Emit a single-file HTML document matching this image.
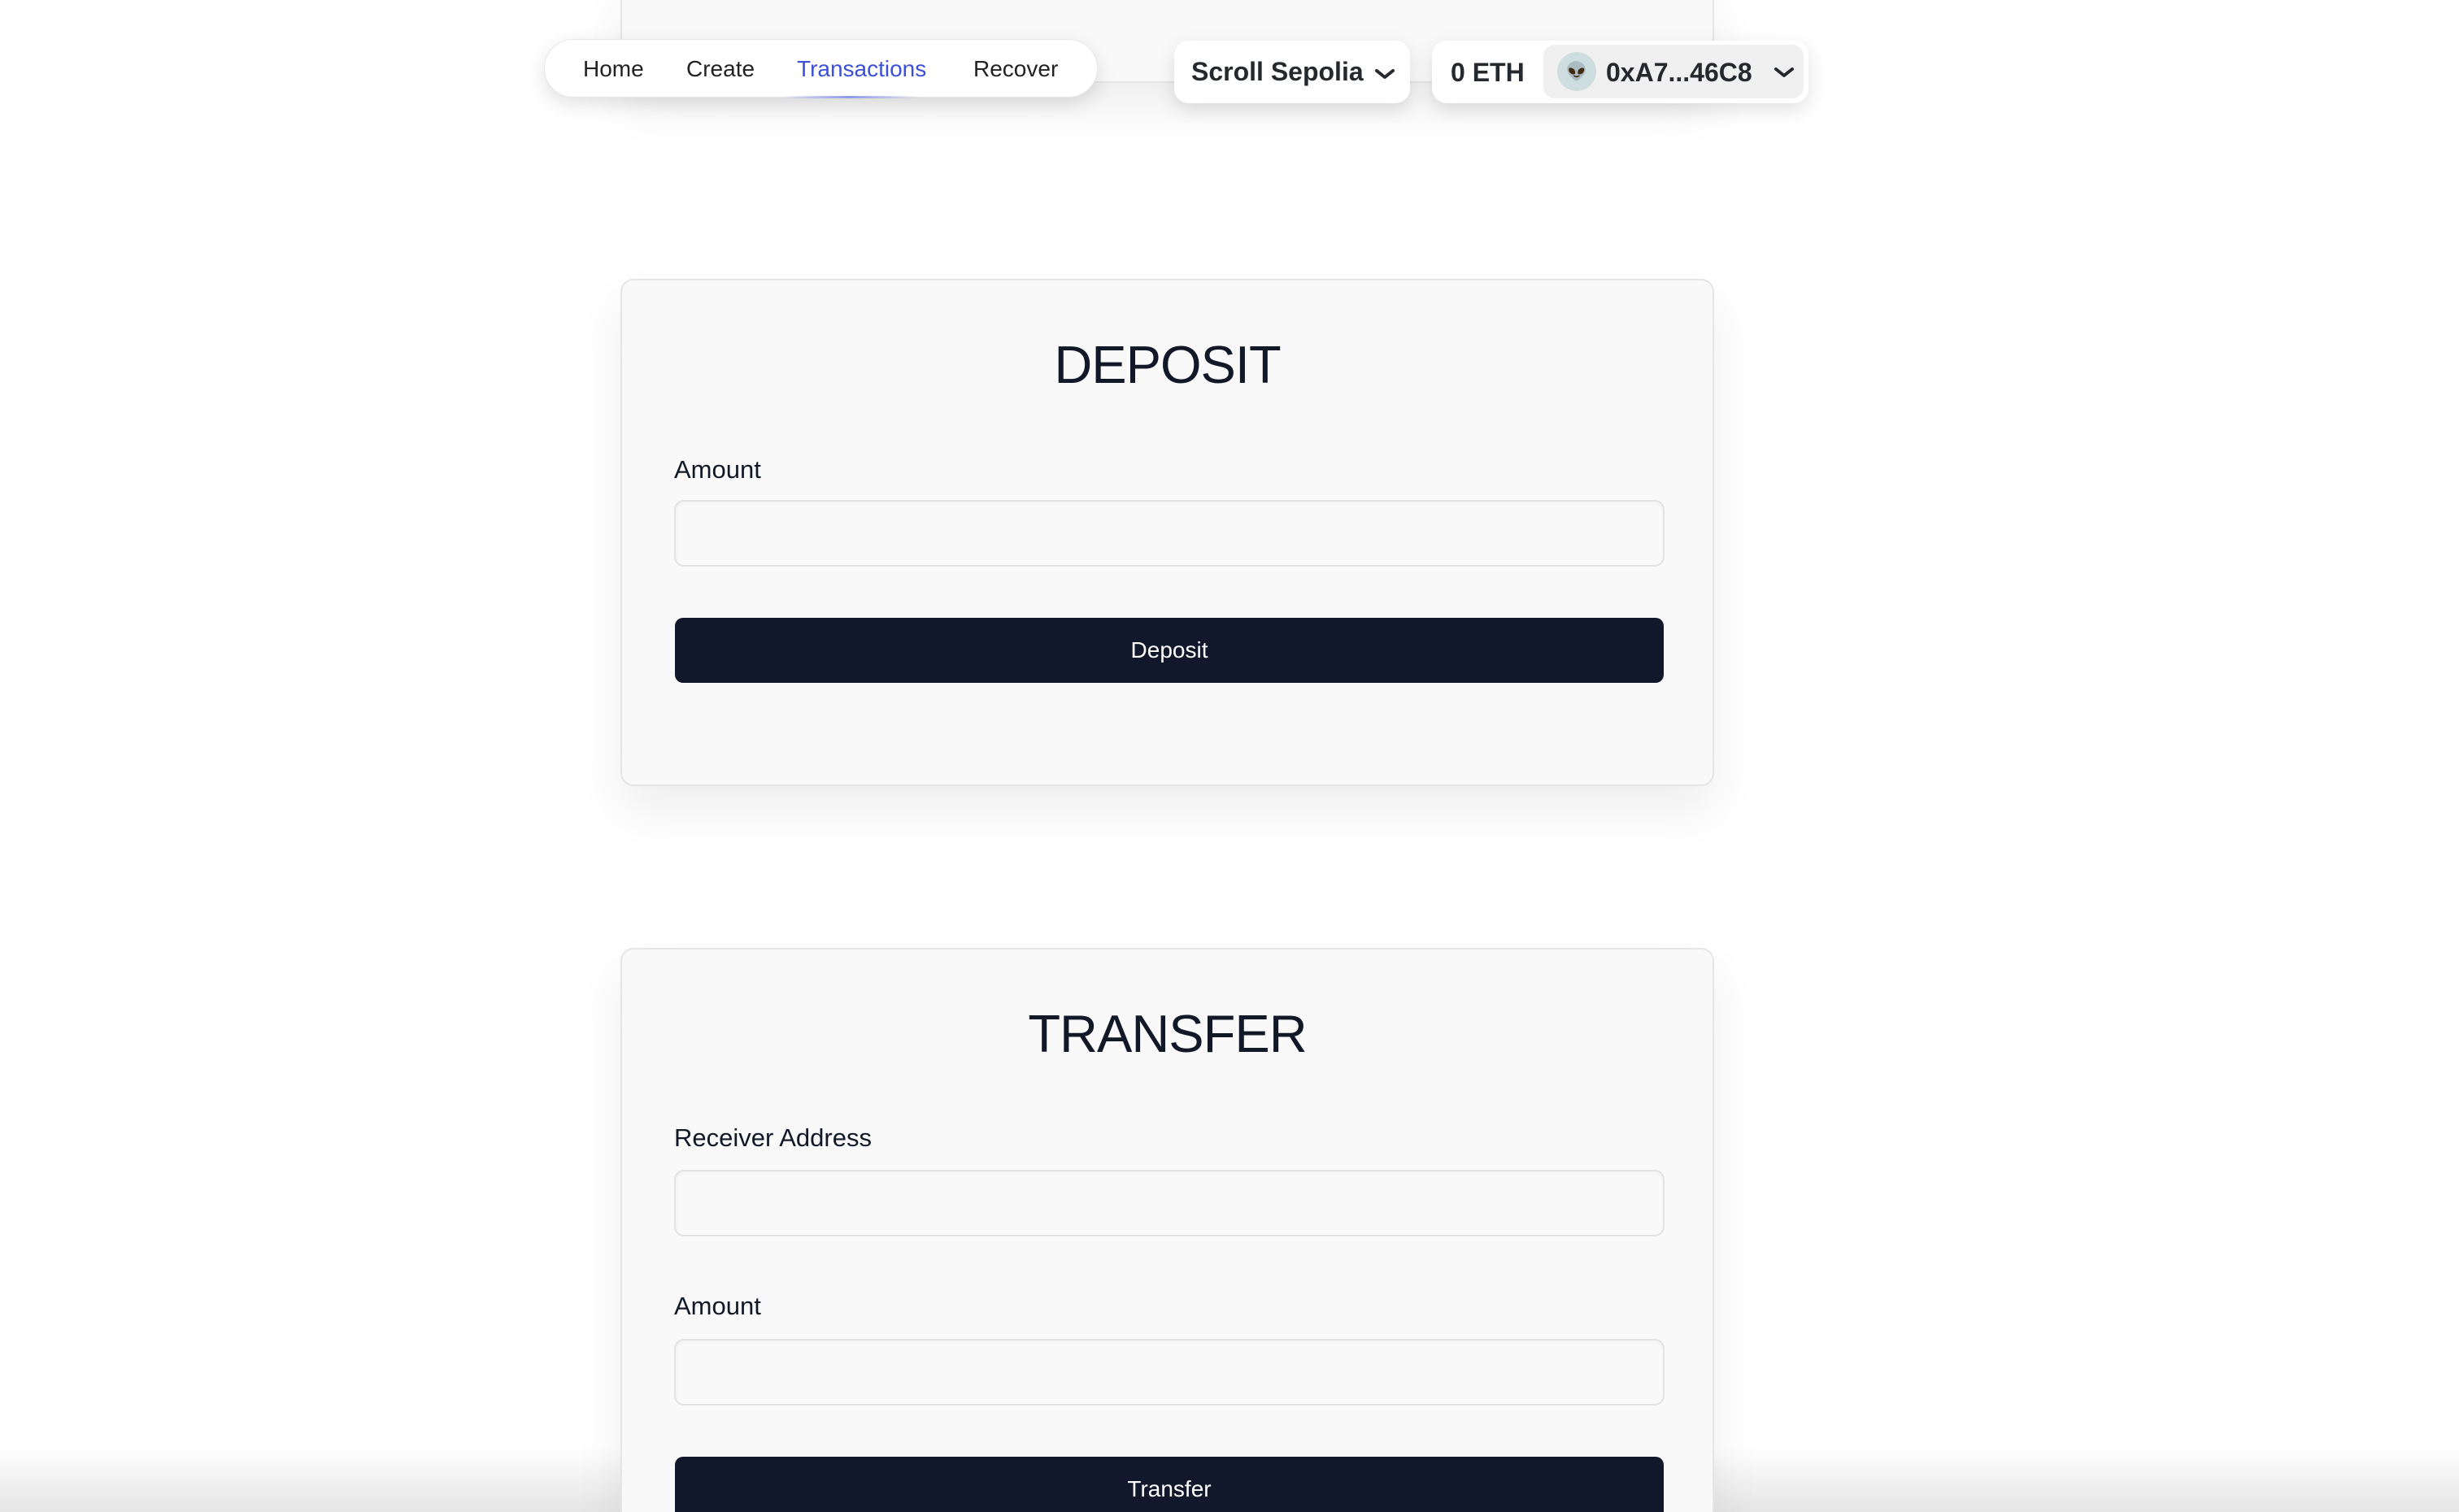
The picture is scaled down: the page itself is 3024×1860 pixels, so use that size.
<!DOCTYPE html>
<html style="width:3024px;height:1860px;overflow:hidden"><head><meta charset="utf-8"><style>
*{box-sizing:border-box;margin:0;padding:0}
body{width:3024px;height:1860px;background:#fff;position:relative;overflow:hidden;font-family:"Liberation Sans",sans-serif;color:#111827}
.card{position:absolute;left:763px;width:1345px;background:#f9f9f9;border:2px solid #e5e5e5;border-radius:16px;box-shadow:0 30px 60px rgba(0,0,0,0.07)}
.title{position:absolute;left:0;right:0;text-align:center;font-size:65px;color:#111827;letter-spacing:-1px}
.lbl{position:absolute;left:64px;font-size:31px;color:#111827}
.inp{position:absolute;left:64px;width:1218px;height:82px;border:2px solid #e3e3e3;border-radius:12px;background:#f9f9f9;box-shadow:inset 0 2px 4px rgba(0,0,0,0.04)}
.btn{position:absolute;left:65px;width:1216px;height:80px;background:#12182b;border-radius:10px;color:#fff;font-size:28px;text-align:center;line-height:80px}
.pill{position:absolute;background:#fff;border-radius:40px;box-shadow:0 8px 24px rgba(0,0,0,0.12)}
.nav a{position:absolute;top:20px;font-size:28px;color:#222}
</style></head><body>
<div style="position:absolute;left:0;top:1780px;width:3024px;height:80px;background:linear-gradient(180deg,rgba(220,220,220,0),rgba(220,220,220,0.75))"></div>
<div class="card" style="top:-20px;height:122px"></div>

<div class="pill nav" style="left:669px;top:48px;width:681px;height:72px;border:1px solid #e8e8e8">
<a style="left:47px">Home</a><a style="left:174px">Create</a><a style="left:310px;color:#3b4fd8">Transactions</a><a style="left:527px">Recover</a>
<div style="position:absolute;left:290px;top:69px;width:170px;height:3px;background:linear-gradient(90deg,transparent,#8e9be8,transparent)"></div>
</div>

<div class="pill" style="left:1444px;top:50px;width:290px;height:77px;border-radius:18px;font-weight:bold;font-size:32px;line-height:77px;padding-left:21px;color:#25292e">Scroll Sepolia <svg width="26" height="16" viewBox="0 0 26 16" style="margin-left:4px"><path d="M3 4 L13 12 L23 4" stroke="#25292e" stroke-width="4" fill="none" stroke-linecap="round" stroke-linejoin="round"/></svg></div>

<div class="pill" style="left:1761px;top:50px;width:463px;height:77px;border-radius:18px;font-weight:bold;font-size:32px;color:#25292e">
<span style="position:absolute;left:23px;top:21px">0 ETH</span>
<div style="position:absolute;left:137px;top:5px;width:320px;height:66px;background:#f0f0f0;border-radius:14px">
<div style="position:absolute;left:17px;top:9px;width:48px;height:48px;border-radius:50%;background:#cddde0;text-align:center;line-height:48px;font-size:22px">👽</div>
<span style="position:absolute;left:77px;top:16px">0xA7...46C8</span>
<svg width="26" height="16" viewBox="0 0 26 16" style="position:absolute;left:283px;top:26px"><path d="M3 4 L13 12 L23 4" stroke="#25292e" stroke-width="4" fill="none" stroke-linecap="round" stroke-linejoin="round"/></svg>
</div></div>

<div class="card" style="top:343px;height:624px">
<div class="title" style="top:66px">DEPOSIT</div>
<div class="lbl" style="top:215px">Amount</div>
<div class="inp" style="top:270px"></div>
<div class="btn" style="top:415px">Deposit</div>
</div>

<div class="card" style="top:1166px;height:694px;border-bottom:none;border-radius:16px 16px 0 0">
<div class="title" style="top:66px">TRANSFER</div>
<div class="lbl" style="top:214px">Receiver Address</div>
<div class="inp" style="top:271px"></div>
<div class="lbl" style="top:421px">Amount</div>
<div class="inp" style="top:479px"></div>
<div class="btn" style="top:624px;height:120px;border-radius:10px 10px 0 0;line-height:80px">Transfer</div>
</div>
</body></html>
